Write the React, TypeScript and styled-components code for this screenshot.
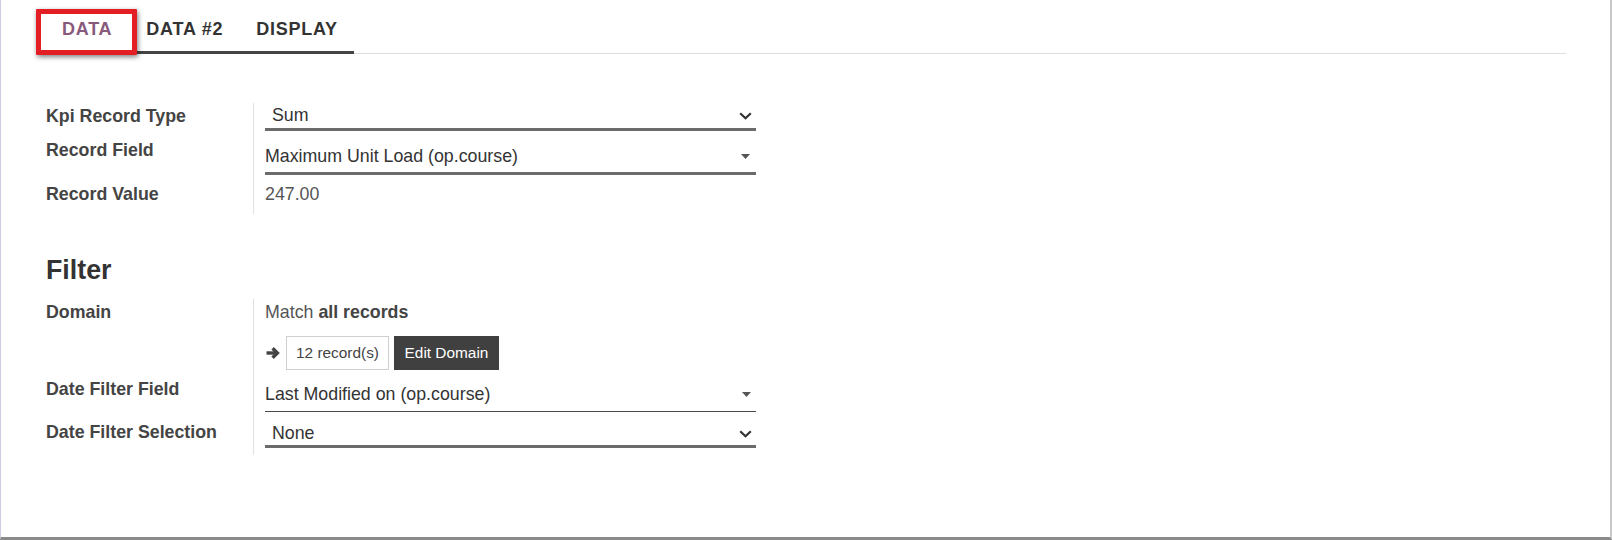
import React from "react";
import styled, { createGlobalStyle } from "styled-components";

const GlobalStyle = createGlobalStyle`
  html, body { margin: 0; padding: 0; background: #fff; }
  body { font-family: "Liberation Sans", Arial, sans-serif; }
`;

const Page = styled.div`
  width: 1612px;
  height: 540px;
  box-sizing: border-box;
  border-left: 1px solid #cfcbe0;
  border-right: 2px solid #c8c8c8;
  border-bottom: 3px solid #8a8a8a;
  overflow: hidden;
  background: #fff;
`;

const TabBar = styled.div`
  display: flex;
  align-items: flex-end;
  margin: 9px 0 0 35px;
  width: 1530px;
  border-bottom: 1px solid #dedede;
`;

const Tab = styled.div<{ $annotated?: boolean }>`
  box-sizing: border-box;
  display: flex;
  align-items: center;
  font-size: 18px;
  letter-spacing: 0.75px;
  font-weight: 700;
  white-space: nowrap;
  ${(p) =>
    p.$annotated
      ? `
    height: 46px;
    padding: 0 20px 6px 21px;
    border: 5px solid #e31e24;
    border-radius: 1px;
    margin-bottom: -2px;
    margin-right: -8px;
    background: #fff;
    color: #875a7b;
    position: relative;
    z-index: 1;
    box-shadow: 1px 2px 5px rgba(0,0,0,0.5);
  `
      : `
    height: 44px;
    padding: 0 16px 2px 17px;
    border-bottom: 3px solid #444;
    margin-bottom: -1px;
    color: #333;
  `}
`;

const Sheet = styled.div`
  padding-left: 45px;
`;

const FieldTable = styled.div<{ $mt: number }>`
  display: grid;
  grid-template-columns: 207px 503px;
  margin-top: ${(p) => p.$mt}px;
`;

const Label = styled.div<{ $pt: number }>`
  padding-top: ${(p) => p.$pt}px;
  font-size: 17.8px;
  line-height: 26.4px;
  font-weight: 700;
  color: #444;
  white-space: nowrap;
`;

const Cell = styled.div<{ $pb?: number }>`
  border-left: 1px solid #dee2e6;
  padding-left: 11px;
  padding-bottom: ${(p) => p.$pb ?? 0}px;
`;

const SelectBox = styled.div<{
  $pt: number;
  $pb: number;
  $pl: number;
  $pr: number;
  $lh: number;
  $thin?: boolean;
}>`
  display: flex;
  align-items: center;
  justify-content: space-between;
  padding: ${(p) => `${p.$pt}px ${p.$pr}px ${p.$pb}px ${p.$pl}px`};
  line-height: ${(p) => p.$lh}px;
  font-size: 17.8px;
  color: #333;
  border-bottom: ${(p) => (p.$thin ? "1px solid #4a4a4a" : "3px solid #6b6b6b")};
`;

const Value = styled.div`
  padding-top: 6px;
  font-size: 17.8px;
  line-height: 26.4px;
  color: #555;
`;

const Heading = styled.h2`
  margin: 41px 0 13px;
  font-size: 26.8px;
  line-height: 31px;
  font-weight: 700;
  color: #333;
`;

const MatchLine = styled.div`
  font-size: 17.8px;
  line-height: 26px;
  color: #555;
  strong {
    color: #444;
    font-weight: 700;
  }
`;

const RecordsRow = styled.div`
  display: flex;
  align-items: center;
  margin-top: 11px;
`;

const ArrowIcon = styled.svg`
  width: 14px;
  height: 14px;
  margin-right: 6px;
  margin-left: 1px;
  flex: none;
`;

const CountBox = styled.div`
  box-sizing: border-box;
  width: 103px;
  height: 34px;
  display: flex;
  align-items: center;
  justify-content: center;
  border: 1px solid #cfcfcf;
  font-size: 15.4px;
  color: #444;
`;

const EditButton = styled.button`
  box-sizing: border-box;
  width: 105px;
  height: 34px;
  margin-left: 5px;
  border: none;
  border-radius: 0;
  background: #404040;
  color: #fff;
  font-family: "Liberation Sans", Arial, sans-serif;
  font-size: 15.4px;
  padding: 0;
`;

const Chevron = () => (
  <svg width="13" height="8" viewBox="0 0 13 8">
    <path d="M1.2 1.2 L6.5 6.3 L11.8 1.2" fill="none" stroke="#333" strokeWidth="2.2" />
  </svg>
);

const Caret = () => (
  <svg width="9" height="5" viewBox="0 0 9 5">
    <path d="M0 0 H9 L4.5 5 Z" fill="#555" />
  </svg>
);

export default function App() {
  return (
    <>
      <GlobalStyle />
      <Page>
        <TabBar>
          <Tab $annotated>DATA</Tab>
          <Tab>DATA #2</Tab>
          <Tab>DISPLAY</Tab>
        </TabBar>
        <Sheet>
          <FieldTable $mt={49}>
            <Label $pt={0}>Kpi Record Type</Label>
            <Cell>
              <SelectBox $pt={0} $pb={0} $pl={7} $pr={4} $lh={25}>
                <span>Sum</span>
                <Chevron />
              </SelectBox>
            </Cell>
            <Label $pt={6}>Record Field</Label>
            <Cell>
              <SelectBox $pt={12} $pb={3} $pl={0} $pr={6} $lh={26}>
                <span>Maximum Unit Load (op.course)</span>
                <Caret />
              </SelectBox>
            </Cell>
            <Label $pt={6}>Record Value</Label>
            <Cell $pb={7}>
              <Value>247.00</Value>
            </Cell>
          </FieldTable>

          <Heading>Filter</Heading>

          <FieldTable $mt={0}>
            <Label $pt={0}>Domain</Label>
            <Cell>
              <MatchLine>
                Match <strong>all records</strong>
              </MatchLine>
              <RecordsRow>
                <ArrowIcon viewBox="0 0 14 14">
                  <path d="M0.5 7 H10.5" stroke="#444" strokeWidth="3.4" fill="none" />
                  <path d="M6.6 2.2 L11.4 7 L6.6 11.8" stroke="#444" strokeWidth="3.4" fill="none" />
                </ArrowIcon>
                <CountBox>12 record(s)</CountBox>
                <EditButton>Edit Domain</EditButton>
              </RecordsRow>
            </Cell>
            <Label $pt={6}>Date Filter Field</Label>
            <Cell>
              <SelectBox $pt={11} $pb={4} $pl={0} $pr={5} $lh={26} $thin>
                <span>Last Modified on (op.course)</span>
                <Caret />
              </SelectBox>
            </Cell>
            <Label $pt={7}>Date Filter Selection</Label>
            <Cell $pb={7}>
              <SelectBox $pt={10} $pb={0} $pl={7} $pr={4} $lh={23}>
                <span>None</span>
                <Chevron />
              </SelectBox>
            </Cell>
          </FieldTable>
        </Sheet>
      </Page>
    </>
  );
}
